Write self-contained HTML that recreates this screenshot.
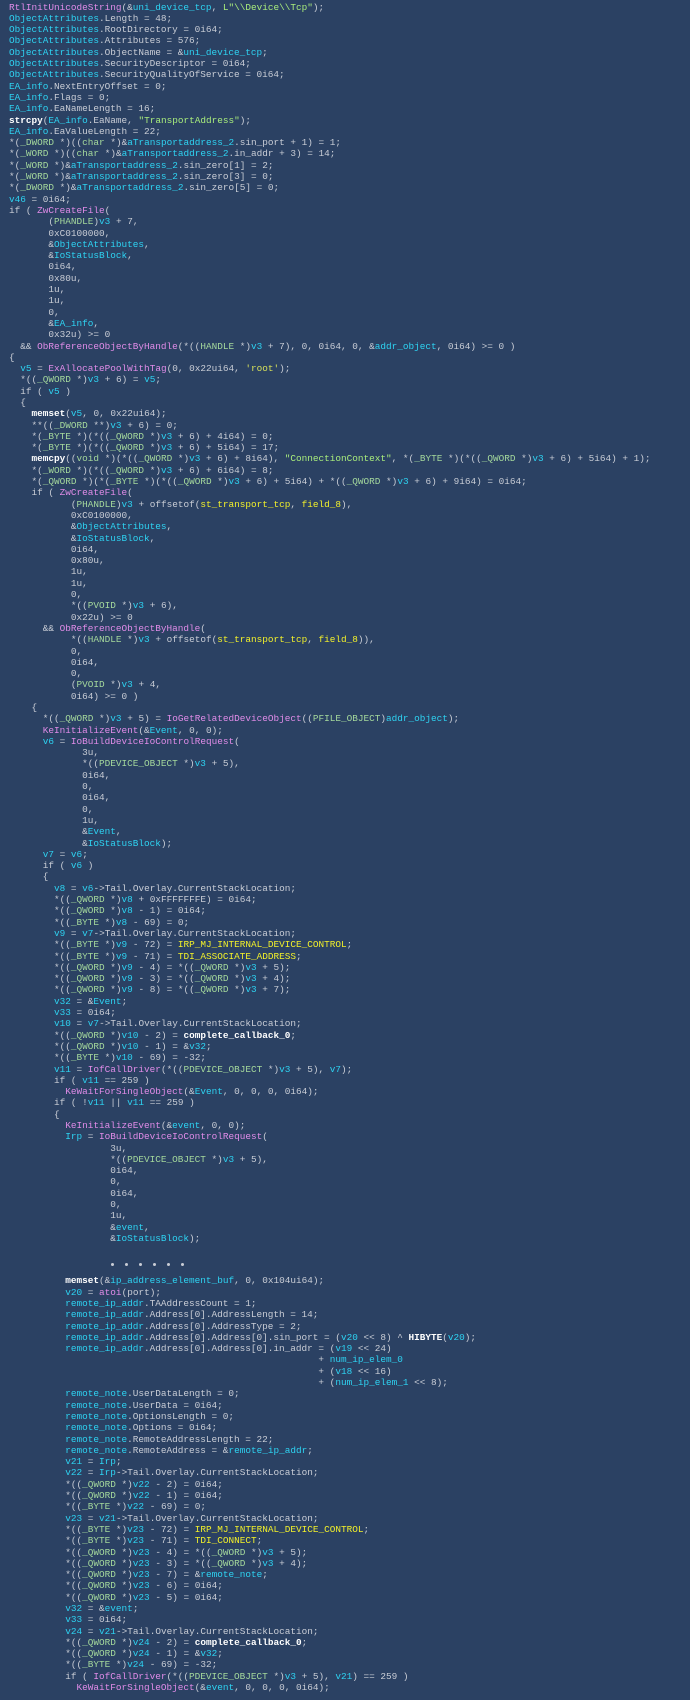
<!DOCTYPE html>
<html><head><meta charset="utf-8">
<style>
html,body{margin:0;padding:0;background:#2b4163;}
body{width:690px;height:1700px;overflow:hidden;position:relative;}
.blk{position:absolute;left:9px;font-family:"Liberation Mono",monospace;font-size:9.4px;color:#c9cdd6;}
.blk div{white-space:pre;height:11.3px;line-height:11.3px;}
.f{color:#e08ce8}.v{color:#2ed3f2}.t{color:#a4d89c}.s{color:#a8ec7c}.y{color:#f2f02a}.w{color:#fff;font-weight:bold}.r{color:#d6e05a}
.dots{position:absolute;top:1263px;left:111px;display:flex;line-height:0;height:3px;}
.dots i{display:block;width:3px;height:3px;border-radius:2px;background:#c9cdd6;margin-right:11px;}
</style></head><body>
<div class="blk" style="top:1.6px">
<div><span class="f">RtlInitUnicodeString</span>(&amp;<span class="v">uni_device_tcp</span>, <span class="s">L"\\Device\\Tcp"</span>);</div>
<div><span class="v">ObjectAttributes</span>.Length = 48;</div>
<div><span class="v">ObjectAttributes</span>.RootDirectory = 0i64;</div>
<div><span class="v">ObjectAttributes</span>.Attributes = 576;</div>
<div><span class="v">ObjectAttributes</span>.ObjectName = &amp;<span class="v">uni_device_tcp</span>;</div>
<div><span class="v">ObjectAttributes</span>.SecurityDescriptor = 0i64;</div>
<div><span class="v">ObjectAttributes</span>.SecurityQualityOfService = 0i64;</div>
<div><span class="v">EA_info</span>.NextEntryOffset = 0;</div>
<div><span class="v">EA_info</span>.Flags = 0;</div>
<div><span class="v">EA_info</span>.EaNameLength = 16;</div>
<div><span class="w">strcpy</span>(<span class="v">EA_info</span>.EaName, <span class="s">"TransportAddress"</span>);</div>
<div><span class="v">EA_info</span>.EaValueLength = 22;</div>
<div>*(<span class="t">_DWORD</span> *)((<span class="t">char</span> *)&amp;<span class="v">aTransportaddress_2</span>.sin_port + 1) = 1;</div>
<div>*(<span class="t">_WORD</span> *)((<span class="t">char</span> *)&amp;<span class="v">aTransportaddress_2</span>.in_addr + 3) = 14;</div>
<div>*(<span class="t">_WORD</span> *)&amp;<span class="v">aTransportaddress_2</span>.sin_zero[1] = 2;</div>
<div>*(<span class="t">_WORD</span> *)&amp;<span class="v">aTransportaddress_2</span>.sin_zero[3] = 0;</div>
<div>*(<span class="t">_DWORD</span> *)&amp;<span class="v">aTransportaddress_2</span>.sin_zero[5] = 0;</div>
<div><span class="v">v46</span> = 0i64;</div>
<div>if ( <span class="f">ZwCreateFile</span>(</div>
<div>       (<span class="t">PHANDLE</span>)<span class="v">v3</span> + 7,</div>
<div>       0xC0100000,</div>
<div>       &amp;<span class="v">ObjectAttributes</span>,</div>
<div>       &amp;<span class="v">IoStatusBlock</span>,</div>
<div>       0i64,</div>
<div>       0x80u,</div>
<div>       1u,</div>
<div>       1u,</div>
<div>       0,</div>
<div>       &amp;<span class="v">EA_info</span>,</div>
<div>       0x32u) &gt;= 0</div>
<div>  &amp;&amp; <span class="f">ObReferenceObjectByHandle</span>(*((<span class="t">HANDLE</span> *)<span class="v">v3</span> + 7), 0, 0i64, 0, &amp;<span class="v">addr_object</span>, 0i64) &gt;= 0 )</div>
<div>{</div>
<div>  <span class="v">v5</span> = <span class="f">ExAllocatePoolWithTag</span>(0, 0x22ui64, <span class="r">'root'</span>);</div>
<div>  *((<span class="t">_QWORD</span> *)<span class="v">v3</span> + 6) = <span class="v">v5</span>;</div>
<div>  if ( <span class="v">v5</span> )</div>
<div>  {</div>
<div>    <span class="w">memset</span>(<span class="v">v5</span>, 0, 0x22ui64);</div>
<div>    **((<span class="t">_DWORD</span> **)<span class="v">v3</span> + 6) = 0;</div>
<div>    *(<span class="t">_BYTE</span> *)(*((<span class="t">_QWORD</span> *)<span class="v">v3</span> + 6) + 4i64) = 0;</div>
<div>    *(<span class="t">_BYTE</span> *)(*((<span class="t">_QWORD</span> *)<span class="v">v3</span> + 6) + 5i64) = 17;</div>
<div>    <span class="w">memcpy</span>((<span class="t">void</span> *)(*((<span class="t">_QWORD</span> *)<span class="v">v3</span> + 6) + 8i64), <span class="s">"ConnectionContext"</span>, *(<span class="t">_BYTE</span> *)(*((<span class="t">_QWORD</span> *)<span class="v">v3</span> + 6) + 5i64) + 1);</div>
<div>    *(<span class="t">_WORD</span> *)(*((<span class="t">_QWORD</span> *)<span class="v">v3</span> + 6) + 6i64) = 8;</div>
<div>    *(<span class="t">_QWORD</span> *)(*(<span class="t">_BYTE</span> *)(*((<span class="t">_QWORD</span> *)<span class="v">v3</span> + 6) + 5i64) + *((<span class="t">_QWORD</span> *)<span class="v">v3</span> + 6) + 9i64) = 0i64;</div>
<div>    if ( <span class="f">ZwCreateFile</span>(</div>
<div>           (<span class="t">PHANDLE</span>)<span class="v">v3</span> + offsetof(<span class="y">st_transport_tcp</span>, <span class="y">field_8</span>),</div>
<div>           0xC0100000,</div>
<div>           &amp;<span class="v">ObjectAttributes</span>,</div>
<div>           &amp;<span class="v">IoStatusBlock</span>,</div>
<div>           0i64,</div>
<div>           0x80u,</div>
<div>           1u,</div>
<div>           1u,</div>
<div>           0,</div>
<div>           *((<span class="t">PVOID</span> *)<span class="v">v3</span> + 6),</div>
<div>           0x22u) &gt;= 0</div>
<div>      &amp;&amp; <span class="f">ObReferenceObjectByHandle</span>(</div>
<div>           *((<span class="t">HANDLE</span> *)<span class="v">v3</span> + offsetof(<span class="y">st_transport_tcp</span>, <span class="y">field_8</span>)),</div>
<div>           0,</div>
<div>           0i64,</div>
<div>           0,</div>
<div>           (<span class="t">PVOID</span> *)<span class="v">v3</span> + 4,</div>
<div>           0i64) &gt;= 0 )</div>
<div>    {</div>
<div>      *((<span class="t">_QWORD</span> *)<span class="v">v3</span> + 5) = <span class="f">IoGetRelatedDeviceObject</span>((<span class="t">PFILE_OBJECT</span>)<span class="v">addr_object</span>);</div>
<div>      <span class="f">KeInitializeEvent</span>(&amp;<span class="v">Event</span>, 0, 0);</div>
<div>      <span class="v">v6</span> = <span class="f">IoBuildDeviceIoControlRequest</span>(</div>
<div>             3u,</div>
<div>             *((<span class="t">PDEVICE_OBJECT</span> *)<span class="v">v3</span> + 5),</div>
<div>             0i64,</div>
<div>             0,</div>
<div>             0i64,</div>
<div>             0,</div>
<div>             1u,</div>
<div>             &amp;<span class="v">Event</span>,</div>
<div>             &amp;<span class="v">IoStatusBlock</span>);</div>
<div>      <span class="v">v7</span> = <span class="v">v6</span>;</div>
<div>      if ( <span class="v">v6</span> )</div>
<div>      {</div>
<div>        <span class="v">v8</span> = <span class="v">v6</span>-&gt;Tail.Overlay.CurrentStackLocation;</div>
<div>        *((<span class="t">_QWORD</span> *)<span class="v">v8</span> + 0xFFFFFFFE) = 0i64;</div>
<div>        *((<span class="t">_QWORD</span> *)<span class="v">v8</span> - 1) = 0i64;</div>
<div>        *((<span class="t">_BYTE</span> *)<span class="v">v8</span> - 69) = 0;</div>
<div>        <span class="v">v9</span> = <span class="v">v7</span>-&gt;Tail.Overlay.CurrentStackLocation;</div>
<div>        *((<span class="t">_BYTE</span> *)<span class="v">v9</span> - 72) = <span class="y">IRP_MJ_INTERNAL_DEVICE_CONTROL</span>;</div>
<div>        *((<span class="t">_BYTE</span> *)<span class="v">v9</span> - 71) = <span class="y">TDI_ASSOCIATE_ADDRESS</span>;</div>
<div>        *((<span class="t">_QWORD</span> *)<span class="v">v9</span> - 4) = *((<span class="t">_QWORD</span> *)<span class="v">v3</span> + 5);</div>
<div>        *((<span class="t">_QWORD</span> *)<span class="v">v9</span> - 3) = *((<span class="t">_QWORD</span> *)<span class="v">v3</span> + 4);</div>
<div>        *((<span class="t">_QWORD</span> *)<span class="v">v9</span> - 8) = *((<span class="t">_QWORD</span> *)<span class="v">v3</span> + 7);</div>
<div>        <span class="v">v32</span> = &amp;<span class="v">Event</span>;</div>
<div>        <span class="v">v33</span> = 0i64;</div>
<div>        <span class="v">v10</span> = <span class="v">v7</span>-&gt;Tail.Overlay.CurrentStackLocation;</div>
<div>        *((<span class="t">_QWORD</span> *)<span class="v">v10</span> - 2) = <span class="w">complete_callback_0</span>;</div>
<div>        *((<span class="t">_QWORD</span> *)<span class="v">v10</span> - 1) = &amp;<span class="v">v32</span>;</div>
<div>        *((<span class="t">_BYTE</span> *)<span class="v">v10</span> - 69) = -32;</div>
<div>        <span class="v">v11</span> = <span class="f">IofCallDriver</span>(*((<span class="t">PDEVICE_OBJECT</span> *)<span class="v">v3</span> + 5), <span class="v">v7</span>);</div>
<div>        if ( <span class="v">v11</span> == 259 )</div>
<div>          <span class="f">KeWaitForSingleObject</span>(&amp;<span class="v">Event</span>, 0, 0, 0, 0i64);</div>
<div>        if ( !<span class="v">v11</span> || <span class="v">v11</span> == 259 )</div>
<div>        {</div>
<div>          <span class="f">KeInitializeEvent</span>(&amp;<span class="v">event</span>, 0, 0);</div>
<div>          <span class="v">Irp</span> = <span class="f">IoBuildDeviceIoControlRequest</span>(</div>
<div>                  3u,</div>
<div>                  *((<span class="t">PDEVICE_OBJECT</span> *)<span class="v">v3</span> + 5),</div>
<div>                  0i64,</div>
<div>                  0,</div>
<div>                  0i64,</div>
<div>                  0,</div>
<div>                  1u,</div>
<div>                  &amp;<span class="v">event</span>,</div>
<div>                  &amp;<span class="v">IoStatusBlock</span>);</div>
</div>
<div class="dots"><i></i><i></i><i></i><i></i><i></i><i></i></div>
<div class="blk" style="top:1275.4px">
<div>          <span class="w">memset</span>(&amp;<span class="v">ip_address_element_buf</span>, 0, 0x104ui64);</div>
<div>          <span class="v">v20</span> = <span class="f">atoi</span>(port);</div>
<div>          <span class="v">remote_ip_addr</span>.TAAddressCount = 1;</div>
<div>          <span class="v">remote_ip_addr</span>.Address[0].AddressLength = 14;</div>
<div>          <span class="v">remote_ip_addr</span>.Address[0].AddressType = 2;</div>
<div>          <span class="v">remote_ip_addr</span>.Address[0].Address[0].sin_port = (<span class="v">v20</span> &lt;&lt; 8) ^ <span class="w">HIBYTE</span>(<span class="v">v20</span>);</div>
<div>          <span class="v">remote_ip_addr</span>.Address[0].Address[0].in_addr = (<span class="v">v19</span> &lt;&lt; 24)</div>
<div>                                                       + <span class="v">num_ip_elem_0</span></div>
<div>                                                       + (<span class="v">v18</span> &lt;&lt; 16)</div>
<div>                                                       + (<span class="v">num_ip_elem_1</span> &lt;&lt; 8);</div>
<div>          <span class="v">remote_note</span>.UserDataLength = 0;</div>
<div>          <span class="v">remote_note</span>.UserData = 0i64;</div>
<div>          <span class="v">remote_note</span>.OptionsLength = 0;</div>
<div>          <span class="v">remote_note</span>.Options = 0i64;</div>
<div>          <span class="v">remote_note</span>.RemoteAddressLength = 22;</div>
<div>          <span class="v">remote_note</span>.RemoteAddress = &amp;<span class="v">remote_ip_addr</span>;</div>
<div>          <span class="v">v21</span> = <span class="v">Irp</span>;</div>
<div>          <span class="v">v22</span> = <span class="v">Irp</span>-&gt;Tail.Overlay.CurrentStackLocation;</div>
<div>          *((<span class="t">_QWORD</span> *)<span class="v">v22</span> - 2) = 0i64;</div>
<div>          *((<span class="t">_QWORD</span> *)<span class="v">v22</span> - 1) = 0i64;</div>
<div>          *((<span class="t">_BYTE</span> *)<span class="v">v22</span> - 69) = 0;</div>
<div>          <span class="v">v23</span> = <span class="v">v21</span>-&gt;Tail.Overlay.CurrentStackLocation;</div>
<div>          *((<span class="t">_BYTE</span> *)<span class="v">v23</span> - 72) = <span class="y">IRP_MJ_INTERNAL_DEVICE_CONTROL</span>;</div>
<div>          *((<span class="t">_BYTE</span> *)<span class="v">v23</span> - 71) = <span class="y">TDI_CONNECT</span>;</div>
<div>          *((<span class="t">_QWORD</span> *)<span class="v">v23</span> - 4) = *((<span class="t">_QWORD</span> *)<span class="v">v3</span> + 5);</div>
<div>          *((<span class="t">_QWORD</span> *)<span class="v">v23</span> - 3) = *((<span class="t">_QWORD</span> *)<span class="v">v3</span> + 4);</div>
<div>          *((<span class="t">_QWORD</span> *)<span class="v">v23</span> - 7) = &amp;<span class="v">remote_note</span>;</div>
<div>          *((<span class="t">_QWORD</span> *)<span class="v">v23</span> - 6) = 0i64;</div>
<div>          *((<span class="t">_QWORD</span> *)<span class="v">v23</span> - 5) = 0i64;</div>
<div>          <span class="v">v32</span> = &amp;<span class="v">event</span>;</div>
<div>          <span class="v">v33</span> = 0i64;</div>
<div>          <span class="v">v24</span> = <span class="v">v21</span>-&gt;Tail.Overlay.CurrentStackLocation;</div>
<div>          *((<span class="t">_QWORD</span> *)<span class="v">v24</span> - 2) = <span class="w">complete_callback_0</span>;</div>
<div>          *((<span class="t">_QWORD</span> *)<span class="v">v24</span> - 1) = &amp;<span class="v">v32</span>;</div>
<div>          *((<span class="t">_BYTE</span> *)<span class="v">v24</span> - 69) = -32;</div>
<div>          if ( <span class="f">IofCallDriver</span>(*((<span class="t">PDEVICE_OBJECT</span> *)<span class="v">v3</span> + 5), <span class="v">v21</span>) == 259 )</div>
<div>            <span class="f">KeWaitForSingleObject</span>(&amp;<span class="v">event</span>, 0, 0, 0, 0i64);</div>
</div>
</body></html>
